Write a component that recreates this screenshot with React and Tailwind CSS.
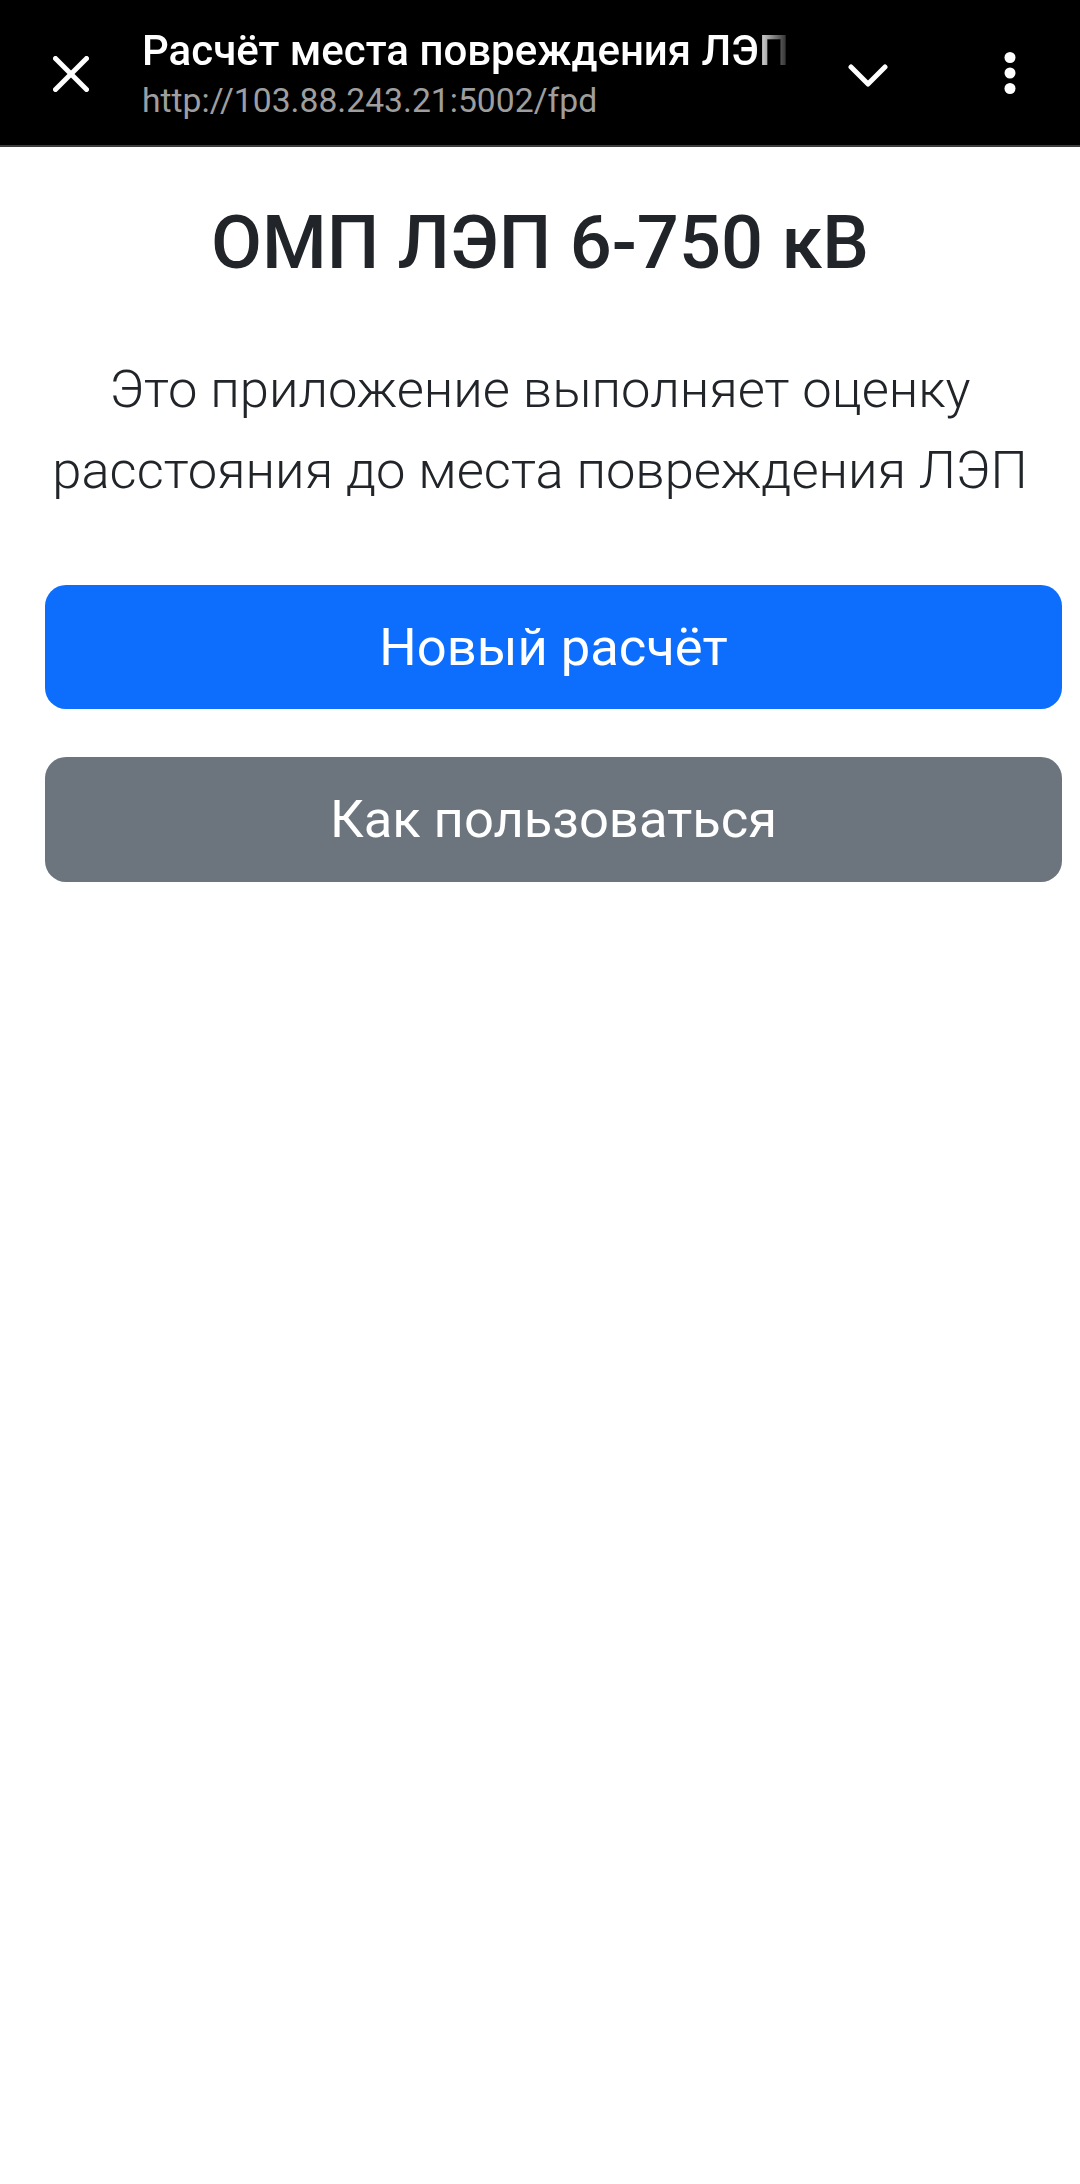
export default function App() {
  return (
    <div className="w-[1080px] min-h-[2184px] bg-white" style={{ fontFamily: "Roboto, 'Noto Sans', sans-serif" }}>
      <header className="flex h-[145px] items-center bg-black">
        <div className="flex w-[142px] justify-center pt-[2px]">
          <svg width="36" height="36" viewBox="0 0 36 36" fill="none" stroke="white" strokeWidth="5" strokeLinecap="round">
            <line x1="2.5" y1="2.5" x2="33.5" y2="33.5" />
            <line x1="33.5" y1="2.5" x2="2.5" y2="33.5" />
          </svg>
        </div>
        <div className="flex w-[652px] flex-col pt-[2px]">
          <div className="overflow-hidden whitespace-nowrap text-[42px] font-medium leading-[50px] text-white [mask-image:linear-gradient(to_right,black_calc(100%-40px),transparent)]">
            Расчёт места повреждения ЛЭП
          </div>
          <div className="mt-[5px] whitespace-nowrap text-[33.7px] leading-[40px] text-[#9e9e9e]">
            http://103.88.243.21:5002/fpd
          </div>
        </div>
        <div className="flex w-[148px] justify-center pt-[6px]">
          <svg width="40" height="23" viewBox="0 0 40 23" fill="none" stroke="white" strokeWidth="5" strokeLinecap="round" strokeLinejoin="round">
            <polyline points="3,3 20,20 37,3" />
          </svg>
        </div>
        <div className="flex w-[135px] justify-center pt-[2px]">
          <svg width="12" height="43" viewBox="0 0 12 43" fill="white">
            <circle cx="6" cy="5.5" r="5.5" />
            <circle cx="6" cy="21" r="5.5" />
            <circle cx="6" cy="36.5" r="5.5" />
          </svg>
        </div>
      </header>
      <div className="h-[2px] bg-[#3c3c3c]" />
      <main className="flex flex-col px-[45px] pt-[51px]">
        <h1 className="text-center text-[74px] font-medium leading-[89px] text-[#212529]">
          ОМП ЛЭП 6-750 кВ
        </h1>
        <p className="mt-[62px] text-center text-[52.5px] font-light leading-[81px] text-[#212529]">
          Это приложение выполняет оценку расстояния до места повреждения ЛЭП
        </p>
        <div className="mt-[74px] flex w-[1017px] flex-col gap-[48px]">
          <button className="flex h-[124px] items-center justify-center rounded-[21px] bg-[#0d6efd] text-[52.5px] leading-none text-white">
            Новый расчёт
          </button>
          <button className="flex h-[125px] items-center justify-center rounded-[21px] bg-[#6c757d] text-[52.5px] leading-none text-white">
            Как пользоваться
          </button>
        </div>
      </main>
    </div>
  );
}
